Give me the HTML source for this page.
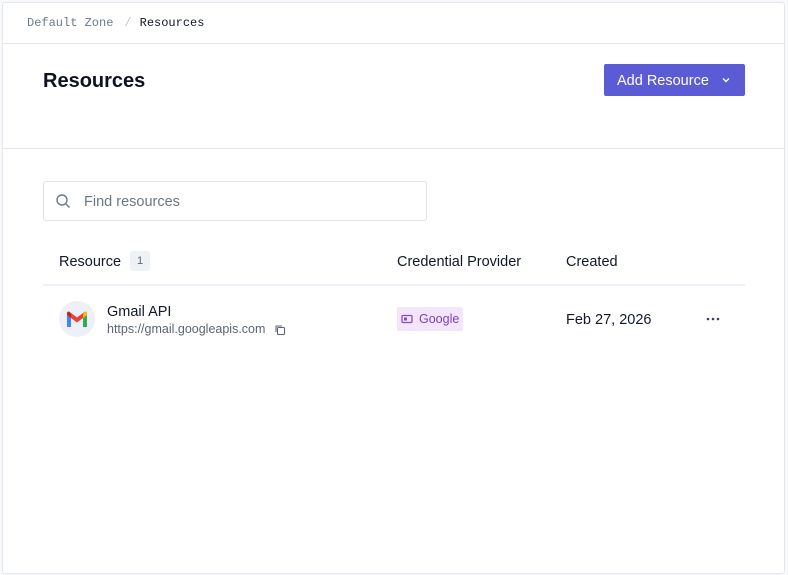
<!DOCTYPE html>
<html><head><meta charset="utf-8"><style>
*{box-sizing:border-box;margin:0;padding:0}
body{width:788px;height:575px;background:#f8f9fb;font-family:"Liberation Sans",sans-serif;color:#111827;position:relative;overflow:hidden}
.frame{position:absolute;left:2px;top:2px;width:783px;height:572px;background:#fff;border:1px solid #e3e7ee;border-radius:3px}
.abs{position:absolute}
.crumb{left:27px;top:16px;font-family:"Liberation Mono",monospace;font-size:12px;color:#6b7a90;white-space:nowrap}
.crumb b{font-weight:normal;color:#111827}
.hl{left:3px;right:3px;height:1px;background:#e3e7ee}
h1{position:absolute;left:43px;top:70px;font-size:20px;font-weight:bold;color:#0f1320}
.btn{left:604px;top:64px;width:141px;height:32px;background:#5b5bd6;border-radius:2px;color:#fff;font-size:14.5px;padding:9px 0 0 13px}
.search{left:43px;top:181px;width:384px;height:40px;border:1px solid #dfe3ea;border-radius:3px}
.ph{left:84px;top:194px;font-size:14.5px;color:#6b7687}
.th{top:254px;font-size:14.5px;color:#111827}
.badge{left:130px;top:251px;width:20px;height:20px;background:#eef1f6;border-radius:3px;font-size:11px;color:#5b6474;text-align:center;line-height:20px}
</style></head><body>
<div class="frame"></div>
<div class="abs crumb">Default Zone<span style="color:#c0c6d0;margin:0 8px 0 11px">/</span><b>Resources</b></div>
<div class="abs hl" style="top:43px"></div>
<h1>Resources</h1>
<div class="abs btn">Add Resource <svg width="12" height="12" viewBox="0 0 12 12" style="margin-left:7px;vertical-align:-1px"><path d="M3 4.5l3 3 3-3" fill="none" stroke="#fff" stroke-width="1.4"/></svg></div>
<div class="abs hl" style="top:148px"></div>
<div class="abs search"></div>
<svg class="abs" style="left:55px;top:193px" width="16" height="16" viewBox="0 0 16 16"><circle cx="7" cy="7" r="5" fill="none" stroke="#6b7687" stroke-width="1.4"/><path d="M11 11l3.5 3.5" stroke="#6b7687" stroke-width="1.4"/></svg>
<div class="abs ph">Find resources</div>
<div class="abs th" style="left:59px">Resource</div>
<div class="abs badge">1</div>
<div class="abs th" style="left:397px">Credential Provider</div>
<div class="abs th" style="left:566px">Created</div>
<div class="abs" style="left:43px;top:284px;width:702px;height:2px;background:#eef1f6"></div>
<div class="abs" style="left:59px;top:301px;width:36px;height:36px;border-radius:50%;background:#eef0f8"></div>
<svg class="abs" style="left:66px;top:311px" width="22" height="17" viewBox="0 0 22 17">
<path d="M1 4v12h4V7z" fill="#4285f4"/><path d="M17 7v9h4V4z" fill="#34a853"/><path d="M1 4l10 7.5L21 4V2.5C21 1 19.5 0 18 1.2L11 6.5 4 1.2C2.5 0 1 1 1 2.5z" fill="#ea4335"/><path d="M17 3.2V7l4-3V2.5C21 1 19.5 0 18 1.2z" fill="#fbbc04"/><path d="M1 2.5V4l4 3V3.2L4 1.2C2.5 0 1 1 1 2.5z" fill="#c5221f"/></svg>
<div class="abs" style="left:107px;top:304px;font-size:14.5px">Gmail API</div>
<div class="abs" style="left:107px;top:322px;font-size:12.5px;color:#5b6474">https://gmail.googleapis.com</div>
<svg class="abs" style="left:274px;top:324px" width="12" height="12" viewBox="0 0 12 12"><rect x="3.5" y="3.5" width="7" height="7" rx="1" fill="none" stroke="#5b6474" stroke-width="1.1"/><path d="M2 8V2.5A.5.5 0 0 1 2.5 2H8" fill="none" stroke="#5b6474" stroke-width="1.1"/></svg>
<div class="abs" style="left:397px;top:307px;width:66px;height:24px;background:#f3e6fc;border-radius:2px"></div>
<svg class="abs" style="left:401px;top:314px" width="12" height="10" viewBox="0 0 12 10"><rect x="1" y="1.5" width="10" height="7" rx="1" fill="none" stroke="#8a4bc4" stroke-width="1.3"/><rect x="3" y="3.5" width="3" height="3" fill="#8a4bc4"/></svg>
<div class="abs" style="left:419px;top:312px;font-size:12.5px;color:#7b3fb8">Google</div>
<div class="abs" style="left:566px;top:312px;font-size:14.5px">Feb 27, 2026</div>
<svg class="abs" style="left:706px;top:317px" width="14" height="4" viewBox="0 0 14 4"><circle cx="2" cy="2" r="1.3" fill="#374151"/><circle cx="7" cy="2" r="1.3" fill="#374151"/><circle cx="12" cy="2" r="1.3" fill="#374151"/></svg>
</body></html>
